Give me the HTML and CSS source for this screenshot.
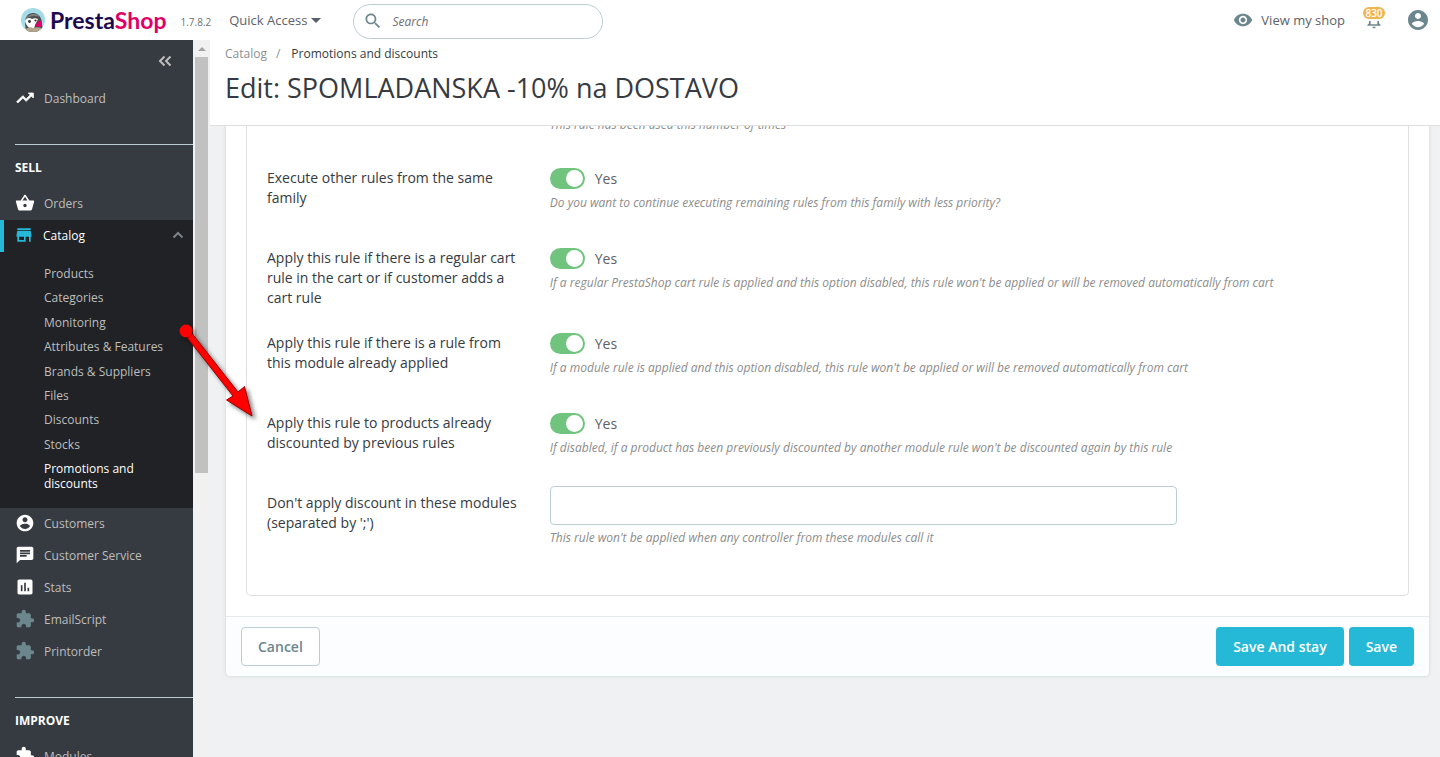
FILE: index.html
```
<!DOCTYPE html>
<html lang="en">
  <head>
    <meta charset="utf-8">
    <meta name="viewport" content="width=device-width">
    <title>Promotions and discounts • PrestaShop</title>
    <link rel="stylesheet" href="styles.css">
  </head>

<body>
    <svg class="sprite">
        <symbol id="i-user" viewBox="0 0 24 24"><path d="M12 2C6.48 2 2 6.48 2 12s4.48 10 10 10 10-4.48 10-10S17.52 2 12 2zm0 3c1.66 0 3 1.34 3 3s-1.34 3-3 3-3-1.34-3-3 1.34-3 3-3zm0 14.2c-2.5 0-4.71-1.28-6-3.22.03-1.99 4-3.08 6-3.08 1.99 0 5.97 1.09 6 3.08-1.29 1.94-3.5 3.22-6 3.22z"/></symbol>
        <symbol id="i-extension" viewBox="0 0 24 24"><path d="M20.5 11H19V7c0-1.1-.9-2-2-2h-4V3.5C13 2.12 11.88 1 10.5 1S8 2.12 8 3.5V5H4c-1.1 0-1.99.9-1.99 2v3.8H3.5c1.49 0 2.7 1.21 2.7 2.7s-1.21 2.7-2.7 2.7H2V20c0 1.1.9 2 2 2h3.8v-1.5c0-1.49 1.21-2.7 2.7-2.7 1.49 0 2.7 1.21 2.7 2.7V22H17c1.1 0 2-.9 2-2v-4h1.5c1.38 0 2.5-1.12 2.5-2.5S21.88 11 20.5 11z"/></symbol>
    </svg>

    <header class="header">
        <a href="#" class="logo">
            <svg class="logo-bird" viewBox="0 0 24 24">
                <defs><clipPath id="disc"><circle cx="12" cy="12" r="12"/></clipPath></defs>
                <g clip-path="url(#disc)">
                    <rect width="24" height="24" fill="#a4dbe8"/>
                    <path d="M5 24l-1-9c0-6 3-10 8-10 6 0 9 5 9 11l1 8z" fill="#4d5052"/>
                    <path d="M4 13c1-3 4-4 7-2 2-1 4-1 6 0l-3 6-1 4c-4 0-8-3-9-8z" fill="#fff"/>
                    <path d="M5 11c1-3 4-5 8-5 3 0 5 1 6 3-4-1-9-2-14 2z" fill="#7b7f80"/>
                    <path d="M5 21c2-2 5-2 7-1 3-1 6-1 8 0v4H5z" fill="#b5a48c"/>
                    <circle cx="8.500" cy="13.500" r="1.400" fill="#333"/>
                    <circle cx="14.500" cy="12.500" r="1.100" fill="#333"/>
                    <path d="M14 17c2-1 3-4 5-5 2 2 2 5 1 7-2 0-5 0-6-2z" fill="#df0067"/>
                </g>
            </svg>
            <span class="logo-text">Presta<span class="logo-shop">Shop</span></span>
        </a>
        <span class="version">1.7.8.2</span>
        <button class="quick">Quick Access <span class="caret"></span></button>
        <form class="search">
            <svg class="icon" viewBox="0 0 24 24"><path d="M15.500 14h-.79l-.28-.27C15.410 12.590 16 11.110 16 9.500 16 5.910 13.090 3 9.500 3S3 5.910 3 9.500 5.910 16 9.500 16c1.610 0 3.090-.59 4.230-1.570l.27.28v.79l5 4.990L20.490 19l-4.990-5zm-6 0C7.010 14 5 11.990 5 9.500S7.010 5 9.500 5 14 7.010 14 9.500 11.990 14 9.500 14z"/></svg>
            <input type="text" placeholder="Search" aria-label="Search">
        </form>
        <div class="header-right">
            <a href="#" class="view-shop">
                <svg class="icon" viewBox="0 0 24 24"><path d="M12 4.500C7 4.500 2.730 7.610 1 12c1.730 4.390 6 7.500 11 7.500s9.270-3.110 11-7.500c-1.730-4.390-6-7.500-11-7.500zM12 17c-2.760 0-5-2.240-5-5s2.240-5 5-5 5 2.240 5 5-2.240 5-5 5zm0-8c-1.660 0-3 1.340-3 3s1.340 3 3 3 3-1.340 3-3-1.340-3-3-3z"/></svg>
                View my shop
            </a>
            <button class="bell" aria-label="Notifications">
                <svg class="icon" viewBox="0 0 24 24"><path d="M12 22c1.100 0 2-.9 2-2h-4c0 1.100.89 2 2 2zm6-6v-5c0-3.070-1.640-5.640-4.500-6.320V4c0-.83-.67-1.500-1.500-1.500s-1.500.67-1.500 1.500v.68C7.630 5.360 6 7.920 6 11v5l-2 2v1h16v-1l-2-2zm-2 1H8v-6c0-2.480 1.510-4.500 4-4.500s4 2.020 4 4.500v6z"/></svg>
                <span class="badge">830</span>
            </button>
            <button class="account" aria-label="Account"><svg class="icon"><use href="#i-user"/></svg></button>
        </div>
    </header>

    <div class="page">
        <nav class="sidebar">
            <button class="collapse" aria-label="Collapse menu">
                <svg viewBox="0 0 14 12"><path d="M6.500 1.500L2 6l4.500 4.500M12.500 1.500L8 6l4.500 4.500"/></svg>
            </button>
            <ul class="menu menu-first">
                <li><a href="#" class="menu-link"><svg class="icon" viewBox="0 0 24 24"><path d="M16 6l2.290 2.290-4.880 4.880-4-4L2 16.590 3.410 18l6-6 4 4 6.300-6.290L22 12V6z" stroke="currentColor"/></svg>Dashboard</a></li>
            </ul>

            <h2 class="menu-title">SELL</h2>
            <ul class="menu">
                <li><a href="#" class="menu-link"><svg class="icon" viewBox="0 0 24 24"><path d="M17.210 9l-4.380-6.560c-.19-.28-.51-.42-.83-.42-.32 0-.64.14-.83.43L6.790 9H2c-.55 0-1 .45-1 1 0 .09.01.18.04.27l2.540 9.270c.23.84 1 1.460 1.920 1.460h13c.92 0 1.690-.62 1.930-1.460l2.540-9.270L23 10c0-.55-.45-1-1-1h-4.790zM9 9l3-4.400L15 9H9zm3 8c-1.100 0-2-.9-2-2s.9-2 2-2 2 .9 2 2-.9 2-2 2z"/></svg>Orders</a></li>
                <li class="open">
                    <a href="#" class="menu-link active"><svg class="icon" viewBox="0 0 24 24"><path d="M20 4H4v2h16V4zm1 10v-2l-1-5H4l-1 5v2h1v6h10v-6h4v6h2v-6h1zm-9 4H6v-4h6v4z"/></svg>Catalog<svg class="chevron" viewBox="0 0 12 8"><path d="M1.500 6.500L6 2l4.500 4.500"/></svg></a>
                    <ul class="submenu">
                        <li><a href="#">Products</a></li>
                        <li><a href="#">Categories</a></li>
                        <li><a href="#">Monitoring</a></li>
                        <li><a href="#">Attributes &amp; Features</a></li>
                        <li><a href="#">Brands &amp; Suppliers</a></li>
                        <li><a href="#">Files</a></li>
                        <li><a href="#">Discounts</a></li>
                        <li><a href="#">Stocks</a></li>
                        <li><a href="#" class="current">Promotions and discounts</a></li>
                    </ul>
                </li>
                <li><a href="#" class="menu-link"><svg class="icon"><use href="#i-user"/></svg>Customers</a></li>
                <li><a href="#" class="menu-link"><svg class="icon" viewBox="0 0 24 24"><path d="M20 2H4c-1.100 0-1.990.9-1.990 2L2 22l4-4h14c1.100 0 2-.9 2-2V4c0-1.100-.9-2-2-2zM6 9h12v2H6V9zm8 5H6v-2h8v2zm4-6H6V6h12v2z"/></svg>Customer Service</a></li>
                <li><a href="#" class="menu-link"><svg class="icon" viewBox="0 0 24 24"><path d="M19 3H5c-1.100 0-2 .9-2 2v14c0 1.100.9 2 2 2h14c1.100 0 2-.9 2-2V5c0-1.100-.9-2-2-2zM9 17H7v-7h2v7zm4 0h-2V7h2v10zm4 0h-2v-4h2v4z"/></svg>Stats</a></li>
                <li><a href="#" class="menu-link muted"><svg class="icon"><use href="#i-extension"/></svg>EmailScript</a></li>
                <li><a href="#" class="menu-link muted"><svg class="icon"><use href="#i-extension"/></svg>Printorder</a></li>
            </ul>

            <h2 class="menu-title">IMPROVE</h2>
            <ul class="menu">
                <li><a href="#" class="menu-link"><svg class="icon"><use href="#i-extension"/></svg>Modules</a></li>
            </ul>
        </nav>

        <div class="scrollbar">
            <span class="scroll-up"></span>
            <div class="scroll-thumb"></div>
        </div>

        <main class="main">
            <div class="page-head">
                <div class="breadcrumb"><a href="#">Catalog</a><span class="slash">/</span><span>Promotions and discounts</span></div>
                <h1>Edit: SPOMLADANSKA -10% na DOSTAVO</h1>
            </div>

            <div class="content">
                <form class="panel">
                    <div class="panel-body">
                        <div class="fields">
                            <div class="row row-cut">
                                <div class="field">
                                    <p class="help">This rule has been used this number of times</p>
                                </div>
                            </div>
                            <div class="row">
                                <label class="label" for="same_family">Execute other rules from the same family</label>
                                <div class="field">
                                    <div class="toggle"><input type="checkbox" id="same_family" checked><span>Yes</span></div>
                                    <p class="help">Do you want to continue executing remaining rules from this family with less priority?</p>
                                </div>
                            </div>
                            <div class="row">
                                <label class="label" for="regular_rule">Apply this rule if there is a regular cart rule in the cart or if customer adds a cart rule</label>
                                <div class="field">
                                    <div class="toggle"><input type="checkbox" id="regular_rule" checked><span>Yes</span></div>
                                    <p class="help">If a regular PrestaShop cart rule is applied and this option disabled, this rule won't be applied or will be removed automatically from cart</p>
                                </div>
                            </div>
                            <div class="row">
                                <label class="label" for="module_rule">Apply this rule if there is a rule from this module already applied</label>
                                <div class="field">
                                    <div class="toggle"><input type="checkbox" id="module_rule" checked><span>Yes</span></div>
                                    <p class="help">If a module rule is applied and this option disabled, this rule won't be applied or will be removed automatically from cart</p>
                                </div>
                            </div>
                            <div class="row">
                                <label class="label" for="discounted">Apply this rule to products already discounted by previous rules</label>
                                <div class="field">
                                    <div class="toggle"><input type="checkbox" id="discounted" checked><span>Yes</span></div>
                                    <p class="help">If disabled, if a product has been previously discounted by another module rule won't be discounted again by this rule</p>
                                </div>
                            </div>
                            <div class="row">
                                <label class="label" for="modules">Don't apply discount in these modules (separated by ';')</label>
                                <div class="field">
                                    <input type="text" class="txt" id="modules">
                                    <p class="help">This rule won't be applied when any controller from these modules call it</p>
                                </div>
                            </div>
                        </div>
                    </div>
                    <div class="panel-footer">
                        <button type="button" class="btn btn-cancel">Cancel</button>
                        <button type="submit" class="btn">Save And stay</button>
                        <button type="submit" class="btn">Save</button>
                    </div>
                </form>
            </div>
        </main>
    </div>

    <svg class="arrow" viewBox="0 0 90 110">
        <g fill="#f00" stroke="#900" stroke-width="1">
            <path d="M11.500 18l5-4L62 72l6.500-5.500L76 96 50.500 80l6.500-4z"/>
            <circle cx="10" cy="11" r="6.500" stroke="none"/>
        </g>
    </svg>
</body>
</html>
```
FILE: styles.css
```
* {
  box-sizing: border-box;
}

body {
  margin: 0;
  height: 100vh;
  display: flex;
  flex-direction: column;
  overflow: hidden;
  background-color: #eff1f2;
  color: #363a41;
  font-family: "Open Sans", sans-serif;
  font-size: 14px;
}

a {
  color: inherit;
  text-decoration: none;
}

button {
  padding: 0;
  border: none;
  background: none;
  color: inherit;
  font: inherit;
  cursor: pointer;
}

ul {
  margin: 0;
  padding: 0;
  list-style: none;
}

.sprite {
  display: none;
}

.icon {
  width: 20px;
  height: 20px;
  flex: none;
  fill: currentColor;
}

/* header */
.header {
  height: 40px;
  flex: none;
  display: flex;
  align-items: center;
  padding: 0 10px 0 21px;
  background-color: #fff;
  color: #6c868e;
}

.logo {
  display: flex;
  align-items: center;
  gap: 5px;
}

.logo-bird {
  width: 24px;
  height: 24px;
}

.logo-text {
  color: #1d0a4e;
  font-family: Lato, sans-serif;
  font-size: 23px;
  font-weight: 700;
  line-height: 32px;
}

.logo-shop {
  color: #df0067;
}

.version {
  margin-left: 14px;
  padding-top: 4px;
  color: #6b6f75;
  font-size: 10px;
}

.quick {
  display: flex;
  align-items: center;
  gap: 4px;
  margin-left: 18px;
  color: #5d6166;
  font-size: 13px;
}

.caret {
  border: 5px solid transparent;
  border-top-color: #566065;
  border-bottom: none;
}

.search {
  width: 250px;
  height: 35px;
  margin: 2px 0 0 32px;
  display: flex;
  align-items: center;
  gap: 9px;
  padding: 0 9px;
  border: 1px solid #bbcdd2;
  border-radius: 18px;
}

.search input {
  width: 100%;
  padding: 0;
  border: none;
  outline: none;
  font: italic 12px "Open Sans", sans-serif;
}

.search input::placeholder {
  color: #6b6f75;
}

.header-right {
  margin-left: auto;
  display: flex;
  align-items: center;
}

.view-shop {
  display: flex;
  align-items: center;
  gap: 8px;
  color: #5d6166;
  font-size: 13px;
}

.view-shop .icon {
  color: #6c868e;
}

.bell {
  position: relative;
  display: flex;
  margin-left: 19px;
}

.badge {
  position: absolute;
  top: -3px;
  left: -1px;
  width: 22px;
  border-radius: 6px;
  background-color: #f0b54f;
  box-shadow: 0 0 0 2px #fff;
  color: #fff;
  font-size: 10px;
  font-weight: 600;
  line-height: 12px;
}

.account {
  display: flex;
  margin-left: 22px;
}

.account .icon {
  width: 24px;
  height: 24px;
}

.page {
  flex: 1;
  min-height: 0;
  display: flex;
}

/* sidebar */
.sidebar {
  width: 193px;
  flex: none;
  overflow: hidden;
  background-color: #363a41;
  color: #bebebe;
  font-size: 12px;
}

.collapse {
  display: block;
  height: 43px;
  margin-left: auto;
  padding: 0 21px 2px;
}

.collapse svg {
  display: block;
  width: 14px;
  height: 12px;
  fill: none;
  stroke: #bebebe;
  stroke-width: 2;
}

.menu-link {
  display: flex;
  align-items: center;
  gap: 9px;
  height: 32px;
  padding: 0 15px 2px;
}

.menu-link .icon {
  color: #fff;
}

.menu-link.muted .icon {
  color: #6c868e;
}

.menu-link.active {
  padding-left: 10px;
  border-left: 4px solid #25b9d7;
  color: #fff;
}

.menu-link.active .icon {
  color: #25b9d7;
}

.chevron {
  width: 12px;
  height: 8px;
  margin-left: auto;
  margin-right: -6px;
  fill: none;
  stroke: #7c8488;
  stroke-width: 2;
}

.menu-title {
  margin: 29px 0 11px 15px;
  padding-top: 14px;
  border-top: 1px solid #bbcdd2;
  color: #fff;
  font-size: 12px;
  line-height: 18px;
}

.open {
  background-color: #202226;
}

.submenu {
  display: flex;
  flex-direction: column;
  justify-content: space-between;
  min-height: 256px;
  padding: 14px 25px 17px 44px;
  line-height: 15px;
}

.submenu .current {
  color: #fff;
}

/* sidebar scrollbar */
.scrollbar {
  width: 17px;
  flex: none;
  padding: 0 2px;
  background-color: #f1f1f1;
}

.scroll-up {
  display: block;
  width: 8px;
  margin: 7px auto 6px 3px;
  border: 4px solid transparent;
  border-top: none;
  border-bottom-color: #a3a3a3;
}

.scroll-thumb {
  height: 58%;
  background-color: #c1c1c1;
}

/* main */
.main {
  flex: 1;
  min-width: 0;
  display: flex;
  flex-direction: column;
}

.page-head {
  height: 86px;
  flex: none;
  padding: 5px 15px 0;
  border-bottom: 1px solid #dfdfdf;
  background-color: #fff;
}

.breadcrumb {
  font-size: 12px;
  line-height: 18px;
}

.breadcrumb a {
  color: #8b9093;
}

.slash {
  margin: 0 11px 0 9px;
  color: #8b9093;
}

h1 {
  margin: 7px 0 0;
  font-size: 27px;
  font-weight: 400;
  line-height: 36px;
}

.content {
  flex: 1;
  min-height: 0;
  overflow: hidden;
  padding: 0 10px 0 15px;
}

/* pulled up so the form looks scrolled under the page head */
.panel {
  margin-top: -11px;
  border: 1px solid #dbe6e9;
  border-radius: 5px;
  background-color: #fff;
  box-shadow: 0 0 4px rgba(0, 0, 0, .06);
}

.panel-body {
  padding: 0 20px 20px;
}

.fields {
  padding: 0 10px 29px 20px;
  border: 1px solid #dfdfdf;
  border-top: none;
  border-radius: 0 0 5px 5px;
}

.row {
  display: grid;
  grid-template-columns: 1fr 3fr;
  min-height: 62px;
  margin-bottom: 18px;
}

.row-cut {
  min-height: 27px;
}

.label {
  padding: 7px 30px 0 0;
  line-height: 20px;
}

.field {
  grid-column: 2;
}

.toggle {
  display: flex;
  align-items: center;
  gap: 10px;
  height: 20px;
  margin: 7px 0 6px;
  color: #5d6166;
}

.toggle input {
  appearance: none;
  display: flex;
  justify-content: flex-end;
  width: 35px;
  height: 21px;
  margin: 0;
  padding: 2px;
  border-radius: 11px;
  background-color: #70c47d;
}

.toggle input:not(:checked) {
  justify-content: flex-start;
  background-color: #b3c7cd;
}

.toggle input::before {
  content: "";
  width: 17px;
  height: 17px;
  border-radius: 50%;
  background-color: #fff;
}

.help {
  margin: 0;
  color: #8c8c8c;
  font-size: 12px;
  font-style: italic;
  line-height: 18px;
}

.txt {
  display: block;
  width: 74%;
  height: 39px;
  margin-bottom: 4px;
  padding: 0 15px;
  border: 1px solid #bbcdd2;
  border-radius: 4px;
  font: inherit;
}

.panel-footer {
  display: flex;
  gap: 5px;
  padding: 10px 15px;
  border-top: 1px solid #e6ebed;
  border-radius: 0 0 5px 5px;
  background-color: #fbfdff;
}

.btn {
  height: 39px;
  padding: 0 17px;
  border-radius: 4px;
  background-color: #25b9d7;
  color: #fff;
  font-weight: 600;
}

.btn-cancel {
  margin-right: auto;
  padding: 0 16px;
  border: 1px solid #bbcdd2;
  background-color: #fff;
  color: #6c868e;
}

.arrow {
  position: absolute;
  left: 176px;
  top: 320px;
  width: 90px;
  height: 110px;
  filter: drop-shadow(3px 3px 2px rgba(0, 0, 0, .5));
  pointer-events: none;
}
```
